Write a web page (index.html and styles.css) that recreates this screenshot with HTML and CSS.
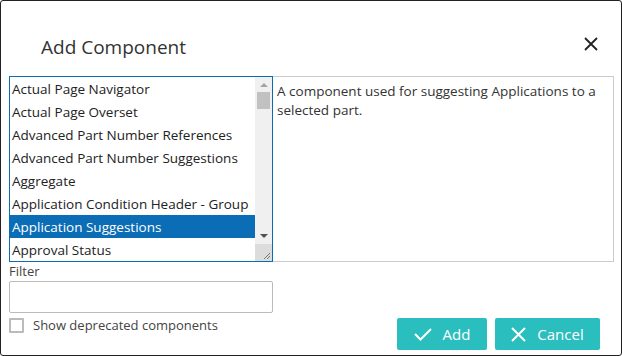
FILE: index.html
```html
<!DOCTYPE html>
<html lang="en">

<head>
    <meta charset="UTF-8" />
    <meta name="viewport" content="width=device-width, initial-scale=1.0" />
    <title>Add Component</title>
    <link rel="stylesheet" href="styles.css">
</head>

<body>
    <div class="dialog">
        <div class="dialog-header">
            <h2>Add Component</h2>
            <button class="close-btn" title="Close">
                <svg width="14" height="14" viewBox="0 0 14 14">
                    <path d="M1 1 L13 13 M13 1 L1 13" stroke="#222" stroke-width="1.8" fill="none" />
                </svg>
            </button>
        </div>

        <div class="dialog-body">
            <div class="picker">
                <div class="listbox">
                    <ul class="items">
                        <li>Actual Page Navigator</li>
                        <li>Actual Page Overset</li>
                        <li>Advanced Part Number References</li>
                        <li>Advanced Part Number Suggestions</li>
                        <li>Aggregate</li>
                        <li>Application Condition Header - Group</li>
                        <li class="selected">Application Suggestions</li>
                        <li>Approval Status</li>
                    </ul>
                    <div class="scrollbar">
                        <span class="arrow up"></span>
                        <span class="thumb"></span>
                        <span class="track"></span>
                        <span class="arrow down"></span>
                        <span class="grip">
                            <svg width="17" height="17" viewBox="0 0 17 17">
                                <path d="M15 9 L9 15 M15 12 L12 15" stroke="#777" stroke-width="1" fill="none" />
                            </svg>
                        </span>
                    </div>
                </div>
                <div class="description">
                    A component used for suggesting Applications to a selected part.
                </div>
            </div>

            <div class="bottom-row">
                <div class="filter-col">
                    <label for="filter">Filter</label>
                    <input type="text" id="filter" />
                    <label class="check">
                        <span class="box"></span>
                        Show deprecated components
                    </label>
                </div>
                <div class="actions">
                    <button class="btn btn-add">
                        <svg width="18" height="14" viewBox="0 0 18 14">
                            <path d="M1 7 L6.5 12.5 L17 2" stroke="#fff" stroke-width="2" fill="none" />
                        </svg>
                        Add
                    </button>
                    <button class="btn btn-cancel">
                        <svg width="15" height="15" viewBox="0 0 15 15">
                            <path d="M1 1 L14 14 M14 1 L1 14" stroke="#fff" stroke-width="2" fill="none" />
                        </svg>
                        Cancel
                    </button>
                </div>
            </div>
        </div>
    </div>
</body>

</html>
```

FILE: styles.css
```css
* {
    box-sizing: border-box;
}

body {
    margin: 0;
    font-family: "Open Sans", "Noto Sans", sans-serif;
    color: #222;
    background: white;
}

.dialog {
    width: 622px;
    height: 356px;
    border: 1px solid #222;
    border-radius: 3px;
    background: white;
    display: flex;
    flex-direction: column;
}

.dialog-header {
    height: 75px;
    display: flex;
    align-items: flex-start;
    justify-content: space-between;
    padding: 0 22px 0 40px;
}

.dialog-header h2 {
    margin: 32px 0 0;
    font-size: 19px;
    font-weight: normal;
    color: #333;
    line-height: 28px;
}

.close-btn {
    margin-top: 35px;
    width: 16px;
    height: 16px;
    padding: 1px;
    border: none;
    background: none;
    cursor: pointer;
}

.dialog-body {
    flex: 1;
    display: flex;
    flex-direction: column;
    padding: 0 7px 5px 8px;
}

.picker {
    display: flex;
    height: 186px;
}

.listbox {
    width: 264px;
    border: 1px solid #0a6cb3;
    display: flex;
}

.items {
    list-style: none;
    margin: 0;
    padding: 0;
    flex: 1;
    font-size: 13.5px;
}

.items li {
    height: 23px;
    line-height: 24px;
    padding-left: 2px;
    white-space: nowrap;
    overflow: hidden;
}

.items li.selected {
    background: #0b6db5;
    color: white;
}

.scrollbar {
    width: 17px;
    background: #f0f0f0;
    display: flex;
    flex-direction: column;
    align-items: center;
}

.arrow {
    width: 0;
    height: 0;
    border-left: 4px solid transparent;
    border-right: 4px solid transparent;
}

.arrow.up {
    margin: 6px 0 5px;
    border-bottom: 4px solid #a3a3a3;
}

.arrow.down {
    margin: 5px 0 6px;
    border-top: 4px solid #505050;
}

.thumb {
    width: 13px;
    height: 17px;
    background: #c1c1c1;
}

.track {
    flex: 1;
}

.grip {
    width: 17px;
    height: 17px;
    background: #dcdcdc;
    display: block;
}

.grip svg {
    display: block;
}

.description {
    flex: 1;
    border: 1px solid #ccc;
    border-left: none;
    padding: 5px 5px 0 4px;
    font-size: 13.5px;
    line-height: 19px;
    color: #333;
}

.bottom-row {
    flex: 1;
    display: flex;
    justify-content: space-between;
    align-items: flex-end;
}

.filter-col {
    width: 264px;
    display: flex;
    flex-direction: column;
    align-self: flex-start;
}

.filter-col > label {
    font-size: 13px;
    line-height: 18px;
    color: #444;
}

.filter-col input {
    height: 32px;
    border: 1px solid #bbb;
    border-radius: 2px;
    margin-top: 1px;
}

.check {
    display: flex;
    align-items: center;
    gap: 9px;
    margin-top: 3px;
    font-size: 13.7px;
    color: #333;
}

.box {
    width: 15px;
    height: 15px;
    border: 2px solid #bbb;
    border-radius: 1px;
}

.actions {
    display: flex;
    gap: 8px;
    margin-right: 14px;
}

.btn {
    height: 32px;
    background: #2bbebe;
    color: white;
    border: none;
    border-radius: 2px;
    font-family: "Open Sans", sans-serif;
    font-size: 15px;
    display: flex;
    align-items: center;
    justify-content: center;
    gap: 11px;
    cursor: pointer;
}

.btn-add {
    width: 90px;
}

.btn-cancel {
    width: 105px;
}
```
